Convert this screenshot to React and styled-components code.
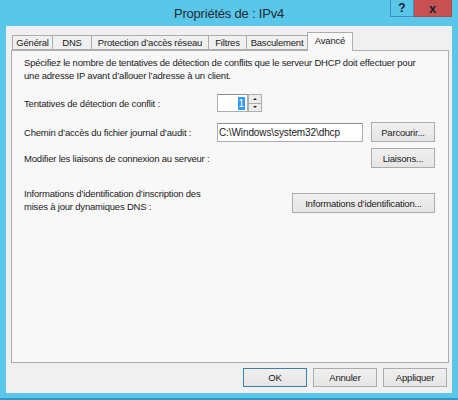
import styled, { createGlobalStyle } from "styled-components"

const Global = createGlobalStyle`
html, body {
  margin: 0;
  padding: 0;
}
body {
  background: #5ac6ea;
  font-family: "Liberation Sans", Arial, sans-serif;
}
`

const Frame = styled.div`
width: 458px;
height: 400px;
box-sizing: border-box;
display: flex;
flex-direction: column;
padding: 0 6px 5px 6px;
border-bottom: 2px solid #3596bf;
background: #5ac6ea;
overflow: hidden;
`

const TitleBar = styled.div`
height: 26px;
flex: none;
display: grid;
grid-template-columns: 1fr auto 1fr;
align-items: center;
`

const Title = styled.div`
grid-column: 2;
font-size: 13px;
letter-spacing: -0.2px;
color: #1f2d33;
`

const Caption = styled.div`
grid-column: 3;
justify-self: end;
align-self: start;
display: flex;
`

const CaptionButton = styled.div`
width: ${p => p.$w}px;
height: 17px;
box-sizing: border-box;
display: flex;
align-items: center;
justify-content: center;
font-weight: bold;
font-size: ${p => p.$close ? 13 : 12}px;
color: #16222a;
background: ${p => p.$close ? "#c75050" : "#5ac6ea"};
border: 1px solid ${p => p.$close ? "#b04848" : "#3a93b8"};
border-top: none;
${p => p.$close && "border-left: none;"}
`

const Client = styled.div`
flex: 1;
display: flex;
flex-direction: column;
background: #f0f0f0;
padding: 6px 3px 6px 5px;
font-size: 9.5px;
letter-spacing: -0.2px;
color: #1a1a1a;
`

const TabStrip = styled.div`
height: 18px;
flex: none;
display: flex;
align-items: flex-end;
padding-left: 1px;
`

const Tab = styled.div`
width: ${p => p.$w}px;
height: ${p => p.$active ? 19 : 15}px;
box-sizing: border-box;
margin-right: -1px;
margin-bottom: ${p => p.$active ? -1 : 0}px;
border: 1px solid #adadad;
border-bottom: ${p => p.$active ? "none" : "1px solid #adadad"};
background: ${p => p.$active ? "#f8f8f8" : "#f0f0f0"};
position: relative;
z-index: ${p => p.$active ? 1 : 0};
display: flex;
align-items: ${p => p.$active ? "flex-start" : "center"};
padding-top: ${p => p.$active ? 2 : 0}px;
justify-content: center;
white-space: nowrap;
font-size: 9.5px;
`

const Panel = styled.div`
flex: 1;
border: 1px solid #adadad;
background: #f8f8f8;
padding: 5px 13px 0 12px;
display: flex;
flex-direction: column;
`

const Text = styled.div`
line-height: 13px;
`

const Row = styled.div`
display: flex;
align-items: ${p => p.$bottom ? "flex-end" : "center"};
height: ${p => p.$h}px;
margin-top: ${p => p.$mt}px;
`

const Label = styled.div`
line-height: 13px;
${p => p.$w ? `width: ${p.$w}px; flex: none;` : "flex: 1;"}
`

const Field = styled.div`
width: ${p => p.$w}px;
height: 19px;
box-sizing: border-box;
background: #fff;
border: 1px solid #abadb3;
border-top-color: #8f8f8f;
display: flex;
align-items: center;
justify-content: ${p => p.$right ? "flex-end" : "flex-start"};
padding: 0 ${p => p.$right ? 2 : 1}px;
white-space: nowrap;
overflow: hidden;
font-size: 10px;
letter-spacing: -0.1px;
`

const Selected = styled.span`
background: #3399ff;
color: #fff;
padding: 0 1px;
line-height: 13px;
`

const Spin = styled.div`
display: flex;
`

const Arrows = styled.div`
width: 14px;
height: 18px;
display: flex;
flex-direction: column;
`

const Arrow = styled.div`
flex: 1;
box-sizing: border-box;
border: 1px solid #acacac;
${p => p.$down && "border-top: none;"}
background: #ececec;
display: flex;
align-items: center;
justify-content: center;
&::after {
  content: "";
  width: 0;
  height: 0;
  border-left: 2px solid transparent;
  border-right: 2px solid transparent;
  ${p => p.$down ? "border-top: 2px solid #222;" : "border-bottom: 2px solid #222;"}
}
`

const Button = styled.div`
width: ${p => p.$w}px;
height: ${p => p.$h || 20}px;
box-sizing: border-box;
flex: none;
${p => p.$push && "margin-left: auto;"}
display: flex;
align-items: center;
justify-content: center;
background: linear-gradient(#f0f0f0, #e5e5e5);
border: 1px solid ${p => p.$default ? "#3c7fb1" : "#acacac"};
white-space: nowrap;
`

const Footer = styled.div`
flex: none;
display: flex;
justify-content: flex-end;
gap: 6px;
padding: 5px 2px 0 0;
`

export default function App() {
  return (
    <>
      <Global />
      <Frame>
        <TitleBar>
          <Title>Propriétés de : IPv4</Title>
          <Caption>
            <CaptionButton $w={24}>?</CaptionButton>
            <CaptionButton $w={38} $close>x</CaptionButton>
          </Caption>
        </TitleBar>
        <Client>
          <TabStrip>
            <Tab $w={41}>Général</Tab>
            <Tab $w={40}>DNS</Tab>
            <Tab $w={118}>Protection d’accès réseau</Tab>
            <Tab $w={39}>Filtres</Tab>
            <Tab $w={62}>Basculement</Tab>
            <Tab $w={46} $active>Avancé</Tab>
          </TabStrip>
          <Panel>
            <Text>
              Spécifiez le nombre de tentatives de détection de conflits que le serveur DHCP doit effectuer pour<br />
              une adresse IP avant d’allouer l’adresse à un client.
            </Text>
            <Row $h={18} $mt={12}>
              <Label $w={193}>Tentatives de détection de conflit :</Label>
              <Spin>
                <Field $w={31} $right style={{ height: 18 }}><Selected>1</Selected></Field>
                <Arrows>
                  <Arrow />
                  <Arrow $down />
                </Arrows>
              </Spin>
            </Row>
            <Row $h={20} $mt={10}>
              <Label $w={193}>Chemin d’accès du fichier journal d’audit :</Label>
              <Field $w={146}>C:\Windows\system32\dhcp</Field>
              <Button $w={64} $push>Parcourir...</Button>
            </Row>
            <Row $h={20} $mt={6}>
              <Label>Modifier les liaisons de connexion au serveur :</Label>
              <Button $w={64}>Liaisons...</Button>
            </Row>
            <Row $h={26} $mt={19} $bottom>
              <Label>
                Informations d’identification d’inscription des<br />
                mises à jour dynamiques DNS :
              </Label>
              <Button $w={143}>Informations d’identification...</Button>
            </Row>
          </Panel>
          <Footer>
            <Button $w={64} $h={19} $default>OK</Button>
            <Button $w={64} $h={19}>Annuler</Button>
            <Button $w={64} $h={19}>Appliquer</Button>
          </Footer>
        </Client>
      </Frame>
    </>
  )
}
